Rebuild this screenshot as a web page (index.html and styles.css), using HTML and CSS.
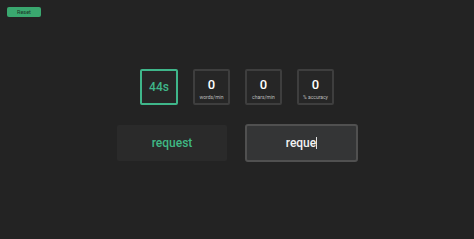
FILE: index.html
```html
<!DOCTYPE html>
<html lang="en">
  <head>
    <meta charset="UTF-8" />
    <meta name="viewport" content="width=device-width, initial-scale=1.0" />
    <title>Typing Test</title>
    <link rel="stylesheet" href="styles.css">
  </head>
  <body>
    <div class="topBar">
      <button class="reset-button" id="reset">Reset</button>
    </div>

    <div class="stats">
      <div class="stat timer" id="timer">44s</div>
      <div class="stat">
        <span class="value" id="wpm">0</span>
        <span class="label">words/min</span>
      </div>
      <div class="stat">
        <span class="value" id="cpm">0</span>
        <span class="label">chars/min</span>
      </div>
      <div class="stat">
        <span class="value" id="accuracy">0</span>
        <span class="label">% accuracy</span>
      </div>
    </div>

    <div class="typing">
      <div class="word" id="word">request</div>
      <div class="entry">
        <span id="typed">reque</span><span class="caret"></span>
      </div>
    </div>
  </body>
</html>
```

FILE: styles.css
```css
body {
  background-color: #232323;
  margin: 0;
  padding: 7px;
  color: #ffffff;
  font-family: Roboto, "Noto Sans", sans-serif;
}

.topBar {
  display: flex;
}

.reset-button {
  width: 34px;
  height: 10px;
  padding: 0;
  border: none;
  border-radius: 2px;
  background-color: #3aa86f;
  color: #1a3326;
  font-family: Roboto, sans-serif;
  font-size: 5.5px;
  line-height: 10px;
  cursor: pointer;
}

.stats {
  display: flex;
  justify-content: center;
  gap: 15px;
  margin-top: 52px;
}

.stat {
  box-sizing: border-box;
  width: 37px;
  height: 36px;
  border: 2px solid #3e3e3e;
  border-radius: 2px;
  background-color: #262626;
  display: flex;
  flex-direction: column;
  align-items: center;
  justify-content: center;
}

.stat .value {
  font-size: 13px;
  line-height: 13px;
  font-weight: 500;
  margin-top: 3px;
}

.stat .label {
  font-size: 5px;
  line-height: 6px;
  margin-top: 3px;
  color: #bdbdbd;
}

.timer {
  width: 38px;
  height: 36px;
  border-color: #3fb68a;
  color: #3fb68a;
  font-size: 12px;
  font-weight: 500;
}

.typing {
  display: flex;
  justify-content: center;
  gap: 18px;
  margin-top: 20px;
  padding-left: 1px;
}

.word {
  width: 110px;
  height: 36px;
  background-color: #2a2a2a;
  border-radius: 2px;
  display: flex;
  align-items: center;
  justify-content: center;
  color: #3fb884;
  font-size: 12px;
  font-weight: 500;
}

.entry {
  box-sizing: border-box;
  width: 113px;
  height: 38px;
  margin-top: -1px;
  background-color: #343536;
  border: 2px solid #505050;
  border-radius: 3px;
  display: flex;
  align-items: center;
  justify-content: center;
  font-size: 12px;
  font-weight: 500;
  color: #f2f2f2;
}

.caret {
  display: inline-block;
  width: 1px;
  height: 12px;
  background-color: #e0e0e0;
}
```
